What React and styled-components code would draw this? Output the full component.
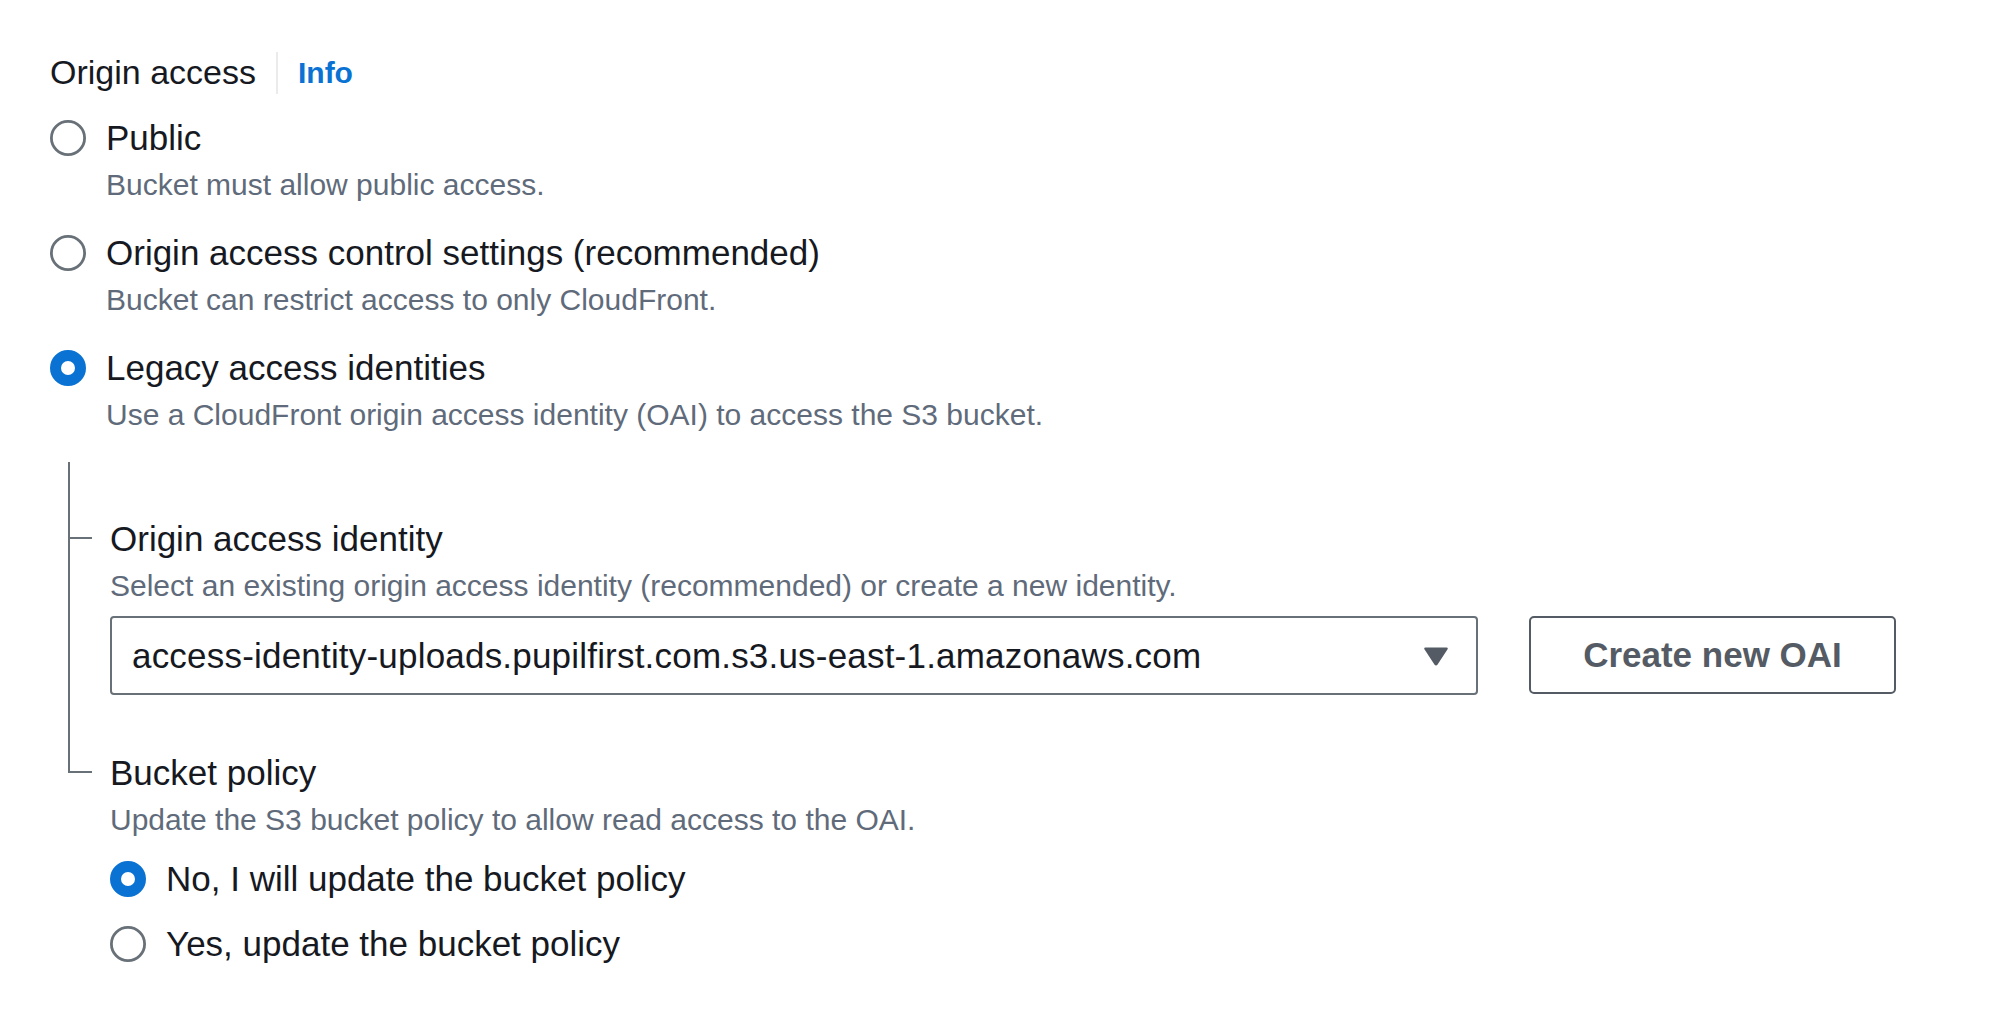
import React from 'react';
import styled, { createGlobalStyle } from 'styled-components';

const color = {
  text: '#16191f',
  muted: '#5f6b7a',
  border: '#687078',
  button: '#545b64',
  blue: '#0972d3',
  divider: '#e9ebed',
};

const GlobalStyle = createGlobalStyle`
  body {
    margin: 0;
    background: #ffffff;
    font-family: "Liberation Sans", Arial, sans-serif;
    color: ${color.text};
  }
`;

const Page = styled.div`
  padding: 45px 99px 40px 50px;
`;

const Header = styled.div`
  display: flex;
  align-items: center;
  height: 55px;
`;

const Label = styled.span`
  font-size: ${(p) => p.$size || 35}px;
  line-height: 55px;
  color: ${color.text};
`;

const InfoLink = styled.a`
  margin-left: 20px;
  padding-left: 20px;
  border-left: 2px solid ${color.divider};
  font-size: 30px;
  line-height: 42px;
  font-weight: 700;
  color: ${color.blue};
  text-decoration: none;
`;

const Description = styled.div`
  font-size: 30px;
  line-height: 40px;
  color: ${color.muted};
`;

const RadioList = styled.div`
  display: flex;
  flex-direction: column;
  gap: ${(p) => p.$gap}px;
  margin-top: ${(p) => p.$top}px;
`;

const RadioRow = styled.label`
  display: grid;
  grid-template-columns: 36px 1fr;
  column-gap: 20px;
`;

const Control = styled.svg`
  width: 36px;
  height: 36px;
  margin-top: 9.5px;
`;

const RadioText = styled.div`
  display: flex;
  flex-direction: column;
`;

const Nested = styled.div`
  margin-left: 18px;
  margin-top: 27px;
`;

const Stem = styled.div`
  height: 49px;
  border-left: 2px solid ${color.border};
`;

const Branch = styled.div`
  position: relative;
  padding-left: 42px;
  padding-bottom: ${(p) => (p.$last ? 0 : 50)}px;

  &::before {
    content: '';
    position: absolute;
    left: 0;
    top: 0;
    width: 2px;
    height: ${(p) => (p.$last ? '28px' : '100%')};
    background: ${color.border};
  }

  &::after {
    content: '';
    position: absolute;
    left: 0;
    top: 26px;
    width: 24px;
    height: 2px;
    background: ${color.border};
  }
`;

const FieldLabel = styled(Label)`
  display: block;
`;

const SelectRow = styled.div`
  display: flex;
  gap: 51px;
  margin-top: 10px;
`;

const Select = styled.div`
  flex: 1;
  height: 79px;
  box-sizing: border-box;
  display: flex;
  align-items: center;
  justify-content: space-between;
  padding: 0 27px 0 20px;
  border: 2px solid ${color.border};
  border-radius: 4px;
  font-size: 35px;
  letter-spacing: 0.2px;
  color: ${color.text};
`;

const Caret = styled.svg`
  width: 26px;
  height: 20px;
`;

const Button = styled.button`
  width: 367px;
  height: 78px;
  box-sizing: border-box;
  border: 2px solid ${color.button};
  border-radius: 5px;
  background: #ffffff;
  font-family: inherit;
  font-size: 35px;
  font-weight: 700;
  color: ${color.button};
`;

function RadioMark({ checked }) {
  return (
    <Control viewBox="0 0 36 36">
      {checked ? (
        <circle cx="18" cy="18" r="12.5" fill="#ffffff" stroke={color.blue} strokeWidth="11" />
      ) : (
        <circle cx="18" cy="18" r="16.6" fill="#ffffff" stroke={color.border} strokeWidth="2.8" />
      )}
    </Control>
  );
}

function Radio({ checked, label, description }) {
  return (
    <RadioRow>
      <RadioMark checked={checked} />
      <RadioText>
        <Label>{label}</Label>
        {description && <Description>{description}</Description>}
      </RadioText>
    </RadioRow>
  );
}

const accessOptions = [
  { label: 'Public', description: 'Bucket must allow public access.' },
  { label: 'Origin access control settings (recommended)', description: 'Bucket can restrict access to only CloudFront.' },
  { label: 'Legacy access identities', description: 'Use a CloudFront origin access identity (OAI) to access the S3 bucket.', checked: true },
];

export default function App() {
  return (
    <Page>
      <GlobalStyle />
      <Header>
        <Label $size={34}>Origin access</Label>
        <InfoLink href="#">Info</InfoLink>
      </Header>

      <RadioList $gap={20} $top={10}>
        {accessOptions.map((o) => (
          <Radio key={o.label} {...o} />
        ))}
      </RadioList>

      <Nested>
        <Stem />
        <Branch>
          <FieldLabel>Origin access identity</FieldLabel>
          <Description>Select an existing origin access identity (recommended) or create a new identity.</Description>
          <SelectRow>
            <Select>
              <span>access-identity-uploads.pupilfirst.com.s3.us-east-1.amazonaws.com</span>
              <Caret viewBox="0 0 26 20">
                <path d="M2.5 1.5 H23.5 Q25.5 1.5 24.4 3.4 L14.6 18.6 Q13 20.4 11.4 18.6 L1.6 3.4 Q0.5 1.5 2.5 1.5 Z" fill={color.button} />
              </Caret>
            </Select>
            <Button>Create new OAI</Button>
          </SelectRow>
        </Branch>
        <Branch $last>
          <FieldLabel>Bucket policy</FieldLabel>
          <Description>Update the S3 bucket policy to allow read access to the OAI.</Description>
          <RadioList $gap={10} $top={11}>
            <Radio checked label="No, I will update the bucket policy" />
            <Radio label="Yes, update the bucket policy" />
          </RadioList>
        </Branch>
      </Nested>
    </Page>
  );
}
